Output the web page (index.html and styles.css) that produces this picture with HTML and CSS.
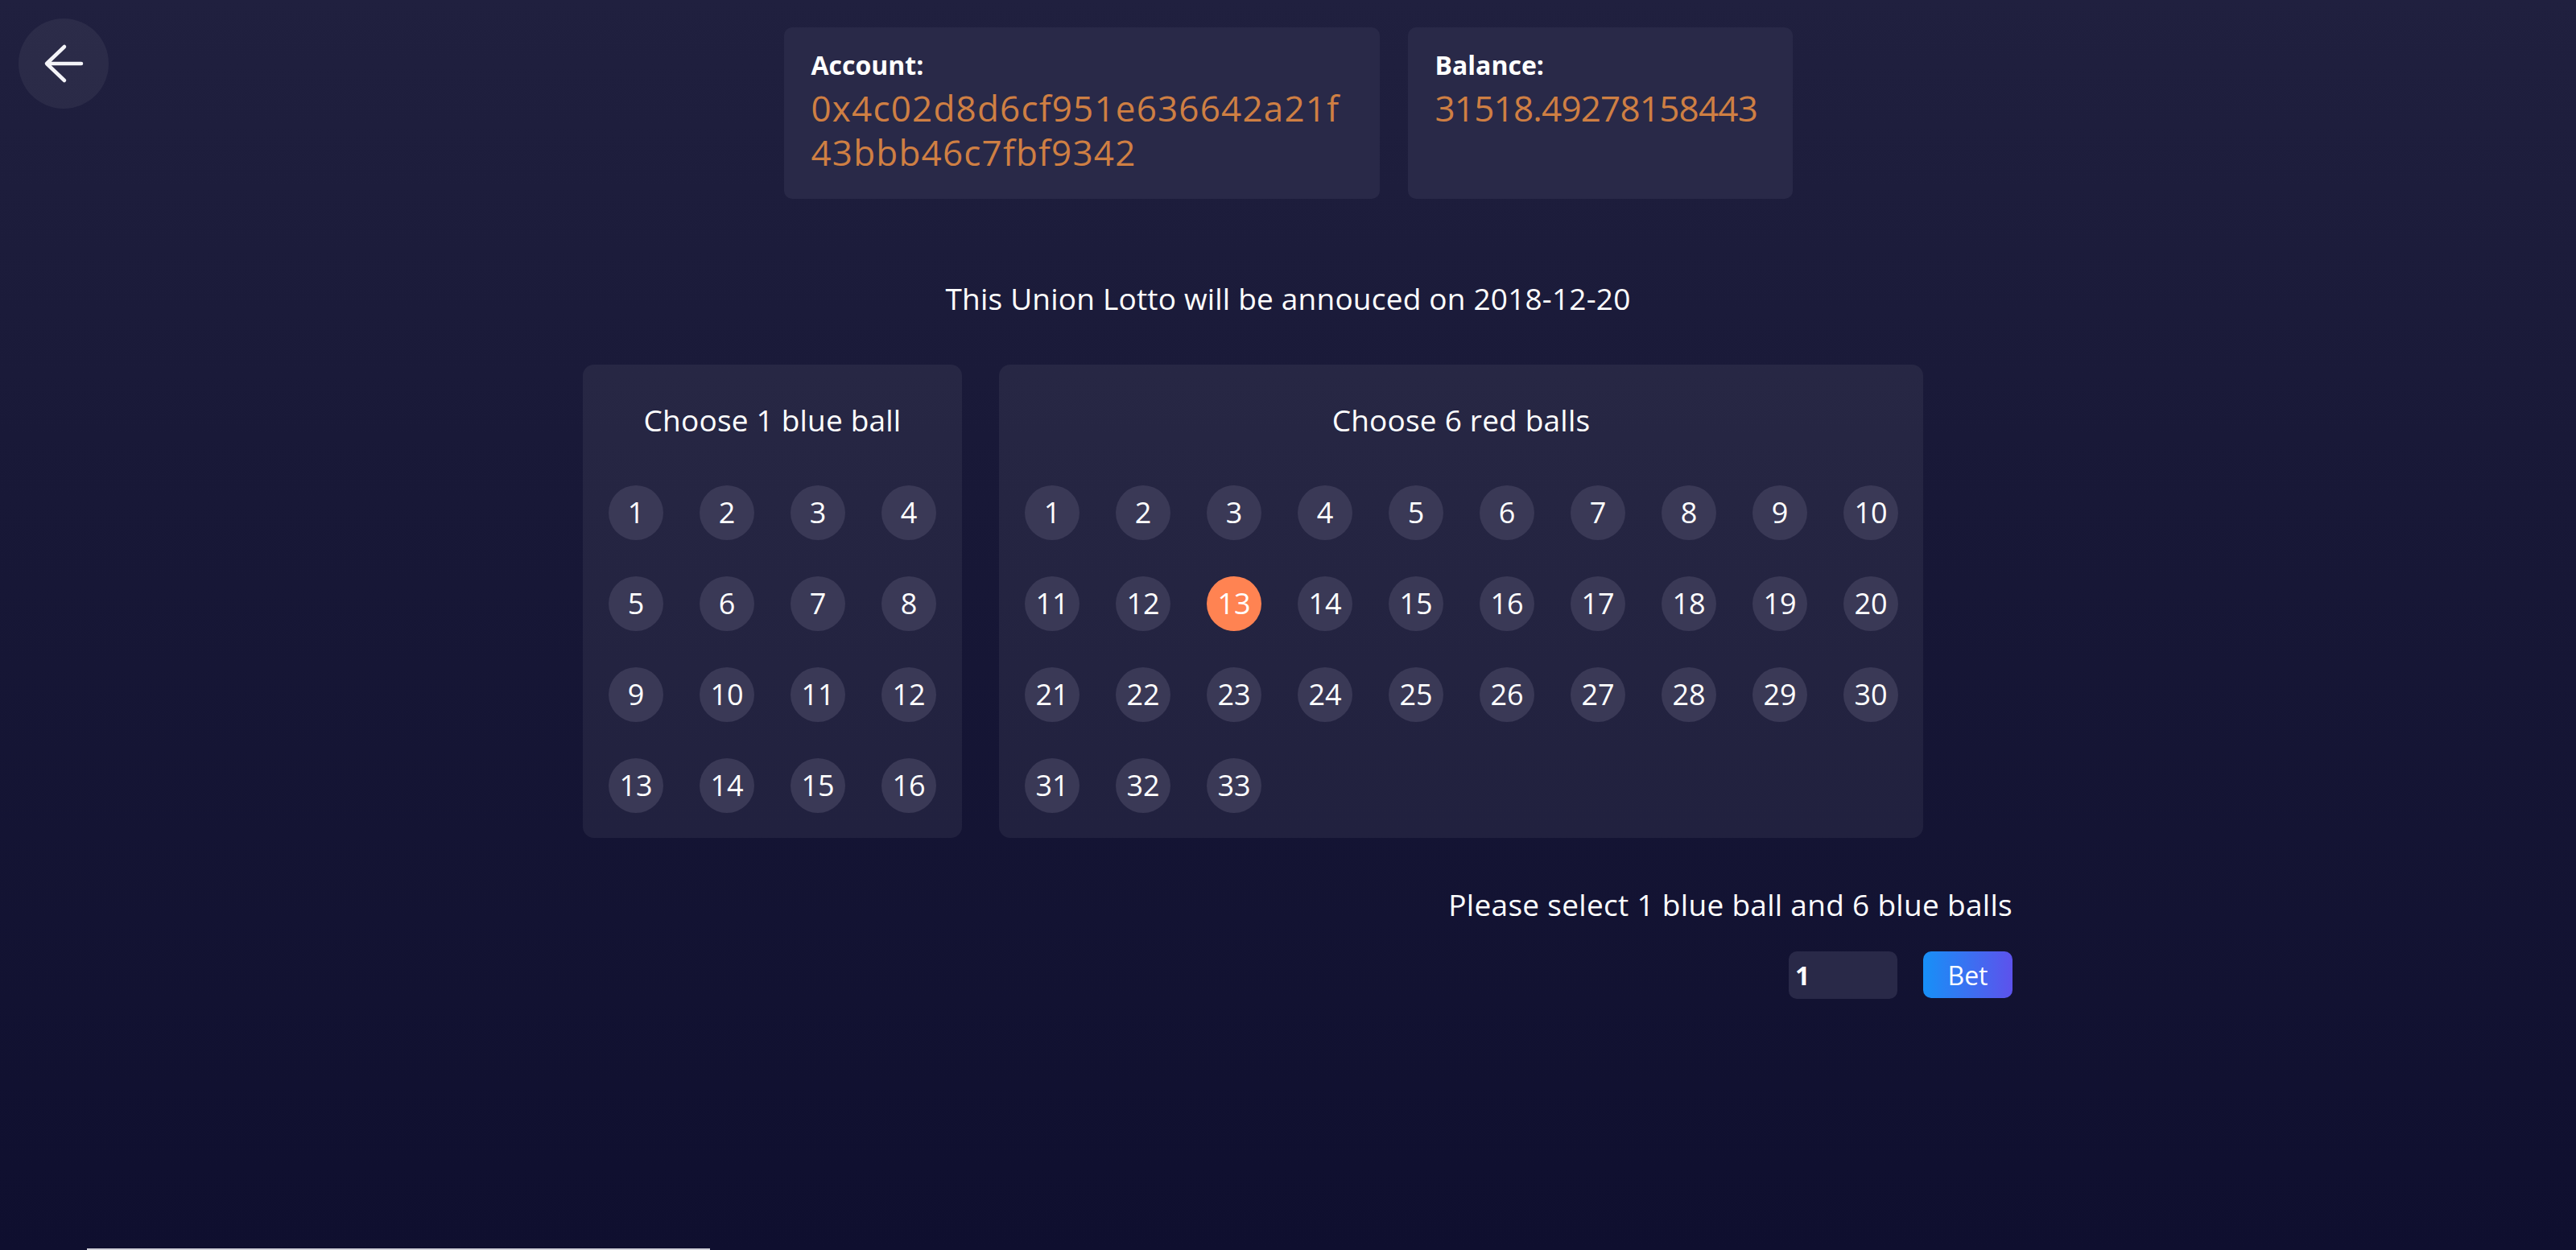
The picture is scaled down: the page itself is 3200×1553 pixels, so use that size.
FILE: index.html
```html
<!DOCTYPE html>
<html lang="en">
<head>
<meta charset="utf-8">
<title>Union Lotto</title>
<link rel="stylesheet" href="styles.css">
</head>
<body>
<div class="page">
  <header class="header">
    <div class="header-left">
      <button class="back" aria-label="Back">
        <svg width="112" height="112" viewBox="0 0 112 112" fill="none" stroke="#f4f4f8" stroke-width="4.5" stroke-linecap="round" stroke-linejoin="round">
          <path d="M78 56 H36 M57 35 L35 56 L57 77"/>
        </svg>
      </button>
    </div>
    <div class="cards">
      <div class="card card-account">
        <div class="card-label">Account:</div>
        <div class="card-value card-value-hex">0x4c02d8d6cf951e636642a21f43bbb46c7fbf9342</div>
      </div>
      <div class="card card-balance">
        <div class="card-label">Balance:</div>
        <div class="card-value card-value-num">31518.49278158443</div>
      </div>
    </div>
    <div class="header-right"></div>
  </header>

  <p class="announce">This Union Lotto will be annouced on 2018-12-20</p>

  <main class="container">
    <div class="panels">
      <section class="panel panel-blue">
        <h3 class="panel-title">Choose 1 blue ball</h3>
        <div class="balls balls-4">
          <span class="ball">1</span><span class="ball">2</span><span class="ball">3</span><span class="ball">4</span>
          <span class="ball">5</span><span class="ball">6</span><span class="ball">7</span><span class="ball">8</span>
          <span class="ball">9</span><span class="ball">10</span><span class="ball">11</span><span class="ball">12</span>
          <span class="ball">13</span><span class="ball">14</span><span class="ball">15</span><span class="ball">16</span>
        </div>
      </section>
      <section class="panel panel-red">
        <h3 class="panel-title">Choose 6 red balls</h3>
        <div class="balls balls-10">
          <span class="ball">1</span><span class="ball">2</span><span class="ball">3</span><span class="ball">4</span><span class="ball">5</span>
          <span class="ball">6</span><span class="ball">7</span><span class="ball">8</span><span class="ball">9</span><span class="ball">10</span>
          <span class="ball">11</span><span class="ball">12</span><span class="ball selected">13</span><span class="ball">14</span><span class="ball">15</span>
          <span class="ball">16</span><span class="ball">17</span><span class="ball">18</span><span class="ball">19</span><span class="ball">20</span>
          <span class="ball">21</span><span class="ball">22</span><span class="ball">23</span><span class="ball">24</span><span class="ball">25</span>
          <span class="ball">26</span><span class="ball">27</span><span class="ball">28</span><span class="ball">29</span><span class="ball">30</span>
          <span class="ball">31</span><span class="ball">32</span><span class="ball">33</span>
        </div>
      </section>
    </div>

    <div class="footer">
      <p class="hint">Please select 1 blue ball and 6 blue balls</p>
      <div class="bet-row">
        <input class="amount" type="text" value="1">
        <button class="bet">Bet</button>
      </div>
    </div>
  </main>
  <div class="scroll-thumb"></div>
</div>
</body>
</html>
```

FILE: styles.css
```css
* { box-sizing: border-box; }

html, body {
  margin: 0;
  padding: 0;
}

body {
  min-height: 100vh;
  background: linear-gradient(180deg, #20203f 0%, #181837 40%, #0f0f2f 100%);
  color: #ffffff;
  font-family: "Open Sans", "Noto Sans", sans-serif;
  overflow: hidden;
}

.page {
  min-height: 1553px;
}

.header {
  display: grid;
  grid-template-columns: 1fr auto 1fr;
  align-items: start;
  padding: 23px 23px 0;
}

.back {
  width: 112px;
  height: 112px;
  border: none;
  border-radius: 50%;
  padding: 0;
  background: rgba(255, 255, 255, 0.055);
  display: flex;
  align-items: center;
  justify-content: center;
  cursor: pointer;
}

.back svg { display: block; }

.cards {
  display: flex;
  gap: 35px;
  margin-top: 11px;
}

.card {
  background: #292948;
  border-radius: 10px;
  padding: 27px 34px 30px;
}

.card-account { width: 740px; }
.card-balance { width: 478px; padding-right: 24px; }

.card-label {
  font-weight: 700;
  font-size: 32px;
  line-height: 40px;
}

.card-value {
  margin-top: 6px;
  color: #cf7f43;
  font-size: 44px;
  line-height: 55px;
}

.card-value-hex {
  letter-spacing: 1.2px;
  word-break: break-all;
}

.card-value-num {
  letter-spacing: -0.8px;
  white-space: nowrap;
}

.announce {
  margin: 100px 0 0;
  text-align: center;
  font-size: 37px;
  letter-spacing: 0.2px;
  line-height: 48px;
}

.container {
  width: 1800px;
  margin: 0 auto;
}

.panels {
  display: flex;
  align-items: stretch;
  gap: 46px;
  padding-left: 24px;
  margin-top: 58px;
}

.panel {
  background: rgba(255, 255, 255, 0.06);
  border-radius: 14px;
  padding: 32px 32px 31px;
}

.panel-blue { width: 471px; }
.panel-red { width: 1148px; }

.panel-title {
  margin: 13px 0 0;
  text-align: center;
  font-weight: 400;
  font-size: 37px;
  letter-spacing: 0.2px;
  line-height: 48px;
}

.balls {
  display: grid;
  gap: 45px;
  margin-top: 57px;
}

.balls-4 { grid-template-columns: repeat(4, 68px); }
.balls-10 { grid-template-columns: repeat(10, 68px); }

.ball {
  width: 68px;
  height: 68px;
  border-radius: 50%;
  background: #3a3956;
  display: flex;
  align-items: center;
  justify-content: center;
  font-size: 36px;
  line-height: 1;
  color: #ffffff;
}

.ball.selected { background: #ff8352; }

.footer {
  text-align: right;
}

.hint {
  margin: 59px 0 0;
  font-size: 37px;
  letter-spacing: 0.3px;
  line-height: 48px;
}

.bet-row {
  display: flex;
  justify-content: flex-end;
  align-items: flex-start;
  gap: 32px;
  margin-top: 34px;
}

.amount {
  width: 135px;
  height: 59px;
  border: none;
  border-radius: 10px;
  background: #292948;
  color: #ffffff;
  font-family: "Open Sans", "Noto Sans", sans-serif;
  font-weight: 700;
  font-size: 32px;
  padding: 0 8px;
  outline: none;
}

.bet {
  width: 111px;
  height: 58px;
  border: none;
  border-radius: 10px;
  background: linear-gradient(90deg, #1790f7 0%, #5d52ec 100%);
  color: #ffffff;
  font-family: "Open Sans", "Noto Sans", sans-serif;
  font-size: 32px;
  padding: 0;
  cursor: pointer;
}

.scroll-thumb {
  position: fixed;
  left: 108px;
  bottom: 0;
  width: 774px;
  height: 2px;
  background: #cfcfd8;
}
```
